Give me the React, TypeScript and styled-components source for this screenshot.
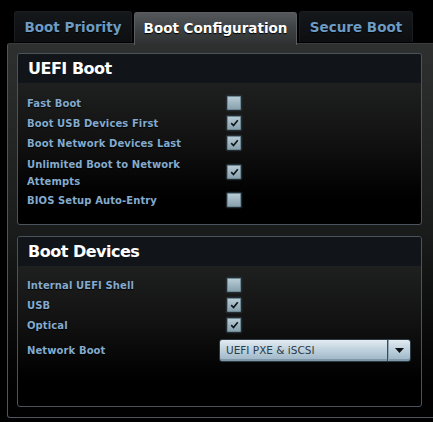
import styled, { createGlobalStyle } from "styled-components";

const GlobalStyle = createGlobalStyle`
  html, body {
    margin: 0;
    padding: 0;
    background: #000;
  }
  * {
    box-sizing: border-box;
  }
`;

type Item = {
  label: string;
  checked?: boolean;
  tall?: boolean;
  select?: string;
};

const uefiItems: Item[] = [
  { label: "Fast Boot", checked: false },
  { label: "Boot USB Devices First", checked: true },
  { label: "Boot Network Devices Last", checked: true },
  { label: "Unlimited Boot to Network Attempts", checked: true, tall: true },
  { label: "BIOS Setup Auto-Entry", checked: false },
];

const deviceItems: Item[] = [
  { label: "Internal UEFI Shell", checked: false },
  { label: "USB", checked: true },
  { label: "Optical", checked: true },
  { label: "Network Boot", select: "UEFI PXE & iSCSI" },
];

const tabs = [
  { name: "Boot Priority", width: 118 },
  { name: "Boot Configuration", width: 163 },
  { name: "Secure Boot", width: 114 },
];

const Check = ({ checked }: { checked?: boolean }) => (
  <CheckBox>
    {checked && (
      <svg width="9" height="8" viewBox="0 0 9 8">
        <path d="M1.2 4.2 L3.5 6.5 L7.8 1.2" fill="none" stroke="#11181c" strokeWidth="1.7" />
      </svg>
    )}
  </CheckBox>
);

const Row = ({ item }: { item: Item }) => (
  <RowWrap $tall={item.tall} $select={!!item.select}>
    <Label $narrow={!!item.select} $tall={item.tall}>
      {item.label}
    </Label>
    {item.select ? (
      <Select>
        <SelectText>{item.select}</SelectText>
        <SelectArrow>
          <svg width="9" height="5" viewBox="0 0 9 5">
            <path d="M0 0 L9 0 L4.5 5 Z" fill="#0c0f12" />
          </svg>
        </SelectArrow>
      </Select>
    ) : (
      <Check checked={item.checked} />
    )}
  </RowWrap>
);

const App = () => {
  return (
    <Screen>
      <GlobalStyle />
      <TabBar>
        {tabs.map((t) => (
          <Tab key={t.name} $width={t.width} $active={t.name === "Boot Configuration"}>
            {t.name}
          </Tab>
        ))}
      </TabBar>
      <Outer>
        <Panel $height={172}>
          <PanelHeader>UEFI Boot</PanelHeader>
          <PanelBody>
            {uefiItems.map((it) => (
              <Row key={it.label} item={it} />
            ))}
          </PanelBody>
        </Panel>
        <Panel $height={171}>
          <PanelHeader>Boot Devices</PanelHeader>
          <PanelBody $top={9}>
            {deviceItems.map((it) => (
              <Row key={it.label} item={it} />
            ))}
          </PanelBody>
        </Panel>
      </Outer>
    </Screen>
  );
};

export default App;

const Screen = styled.div`
  width: 433px;
  height: 422px;
  overflow: hidden;
  background: #000;
  font-family: "DejaVu Sans", Verdana, sans-serif;
`;

const TabBar = styled.div`
  display: flex;
  align-items: flex-end;
  gap: 2px;
  padding: 11px 0 0 14px;
  height: 43px;
`;

const Tab = styled.div<{ $active?: boolean; $width: number }>`
  width: ${(p) => p.$width}px;
  height: ${(p) => (p.$active ? "33px" : "31px")};
  padding-bottom: ${(p) => (p.$active ? "3px" : "1px")};
  display: flex;
  align-items: center;
  justify-content: center;
  font-size: 13.5px;
  font-weight: bold;
  color: ${(p) => (p.$active ? "#ffffff" : "#6c9bc4")};
  text-shadow: 0 1px 1px #000;
  border-radius: 3px 3px 0 0;
  border: 1px solid ${(p) => (p.$active ? "#5a5e62" : "#1a1e21")};
  border-bottom: none;
  background: ${(p) =>
    p.$active
      ? "linear-gradient(#55585b, #3c3f41 55%, #2e3030)"
      : "linear-gradient(#15181b, #0c0e10)"};
  margin-bottom: ${(p) => (p.$active ? "-2px" : "1px")};
  position: relative;
  z-index: ${(p) => (p.$active ? 2 : 0)};
`;

const Outer = styled.div`
  margin-left: 7px;
  width: 440px;
  height: 375px;
  border: 1px solid #4d565e;
  border-top-color: #3a3e40;
  border-radius: 3px;
  background: linear-gradient(#2e302f, #1a1b1b 50%, #050505 85%, #000);
  padding: 9px 0 0 9px;
  display: flex;
  flex-direction: column;
  gap: 11px;
`;

const Panel = styled.div<{ $height: number }>`
  width: 405px;
  height: ${(p) => p.$height}px;
  border: 1px solid #4a545d;
  border-radius: 3px;
  overflow: hidden;
  background: linear-gradient(#252626, #121212 50%, #000 85%);
`;

const PanelHeader = styled.div`
  height: 29px;
  background: #11151a;
  color: #ffffff;
  font-size: 16px;
  font-weight: bold;
  letter-spacing: -0.5px;
  padding-left: 10px;
  display: flex;
  align-items: center;
`;

const PanelBody = styled.div<{ $top?: number }>`
  padding-top: ${(p) => p.$top ?? 10}px;
  display: flex;
  flex-direction: column;
`;

const RowWrap = styled.div<{ $tall?: boolean; $select?: boolean }>`
  display: flex;
  align-items: center;
  height: ${(p) => (p.$tall ? "37px" : p.$select ? "24px" : "20px")};
  margin-top: ${(p) => (p.$select ? "3px" : "0")};
  padding-left: 9px;
`;

const Label = styled.div<{ $narrow?: boolean; $tall?: boolean }>`
  width: ${(p) => (p.$narrow ? "192px" : "199px")};
  font-size: 10px;
  font-weight: bold;
  letter-spacing: 0.1px;
  line-height: 17px;
  padding-top: ${(p) => (p.$tall ? "3px" : "0")};
  padding-right: ${(p) => (p.$tall ? "40px" : "0")};
  color: #84abce;
  text-shadow: 0 1px 1px #000;
`;

const CheckBox = styled.div`
  width: 16px;
  height: 16px;
  border: 1px solid #222c32;
  border-radius: 2px;
  background: linear-gradient(#bccfd8, #9fb6c1 50%, #869fab);
  box-shadow: inset 0 0 0 1px #6f8995, 0 0 1px #4c6470;
  display: flex;
  align-items: center;
  justify-content: center;
`;

const Select = styled.div`
  width: 192px;
  height: 23px;
  display: flex;
  border: 1px solid #2c3a44;
  border-radius: 3px;
  background: linear-gradient(#e2ebf1, #c0d2de 45%, #9cb4c5);
  box-shadow: inset 0 -2px 0 #7f99aa;
`;

const SelectText = styled.div`
  flex: 1;
  display: flex;
  align-items: center;
  padding-left: 6px;
  font-size: 10.5px;
  color: #2b3b48;
  border-right: 1px solid #3d4a54;
  box-shadow: 1px 0 0 #8ea6b6;
`;

const SelectArrow = styled.div`
  width: 22px;
  display: flex;
  align-items: center;
  justify-content: center;
`;
